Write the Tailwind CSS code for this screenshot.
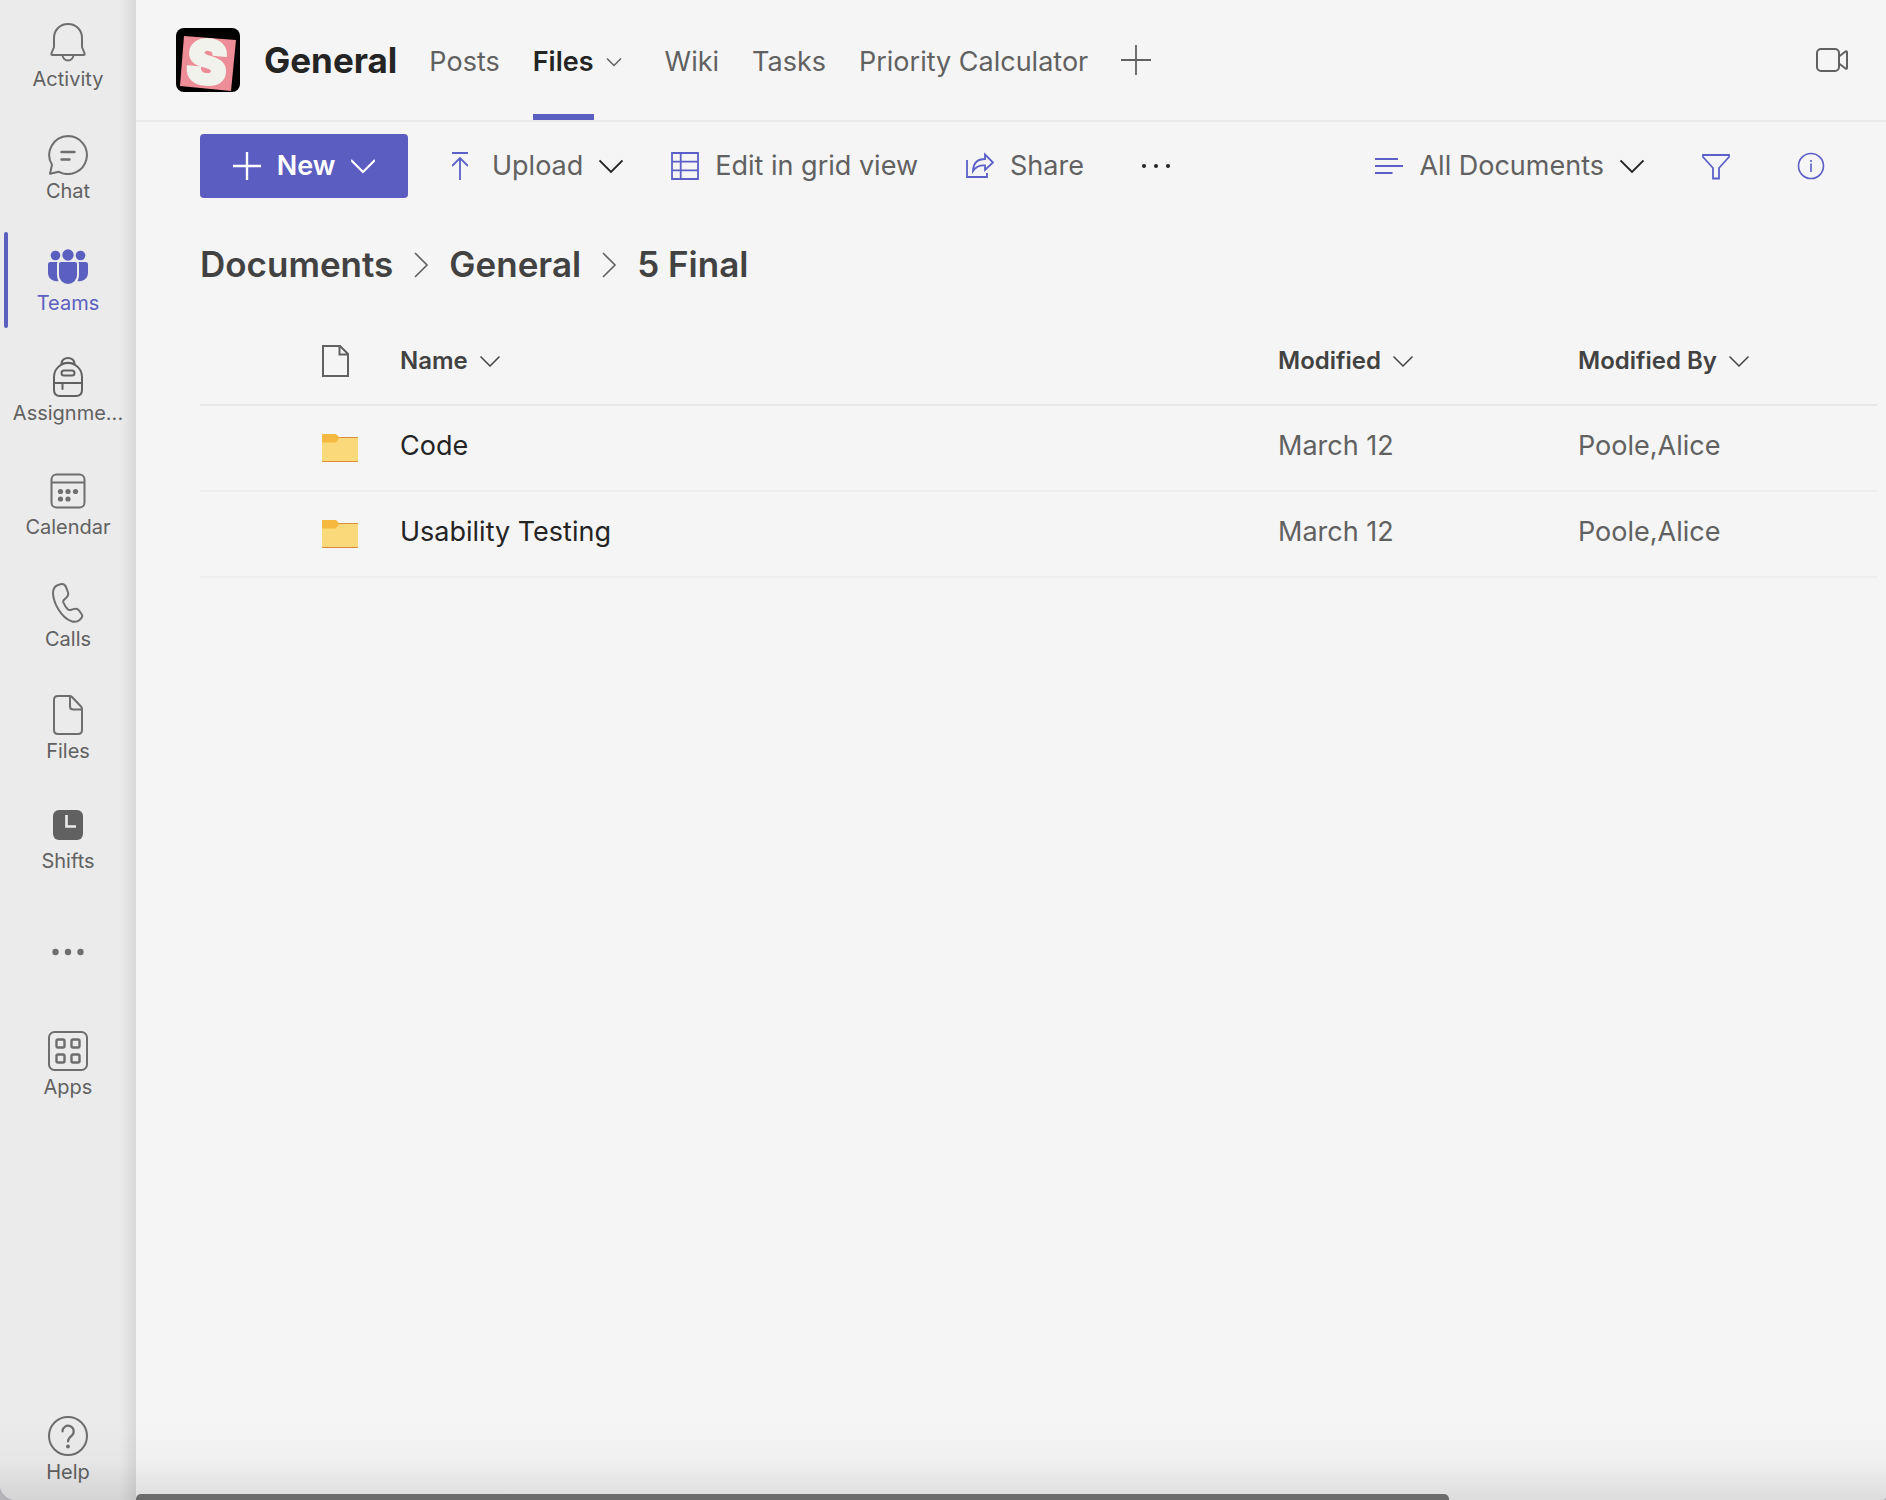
<!DOCTYPE html>
<html lang="en">
<head>
<meta charset="utf-8">
<meta name="viewport" content="width=device-width, initial-scale=1">
<title>General - Files</title>
<script src="https://cdn.jsdelivr.net/npm/@tailwindcss/browser@4"></script>
</head>
<body class="bg-[#b4b4b8] font-[Inter,sans-serif] text-[#616161]">
<div class="relative flex h-screen overflow-hidden rounded-br-[4px] rounded-bl-[16px] bg-[#f5f5f5]">

  <!-- App rail -->
  <nav aria-label="Apps" class="relative flex w-[136px] shrink-0 flex-col bg-[#ebebeb] text-[20px] leading-6">
    <a href="#" class="flex h-28 flex-col items-center gap-1 pt-[23px]">
      <svg class="size-10 shrink-0" viewBox="0 0 40 40" fill="none" stroke="#6e6e6e" stroke-width="2" stroke-linejoin="round" aria-hidden="true"><path d="M20 1C12 1 6 7 6 15v9l-2.600 6.500Q3 32 4.500 32h31Q37 32 36.600 30.500L34 24v-9C34 7 28 1 20 1ZM14.500 32a5.500 5.500 0 0 0 11 0"/></svg>
      <span>Activity</span>
    </a>
    <a href="#" class="flex h-28 flex-col items-center gap-1 pt-[23px]">
      <svg class="size-10 shrink-0" viewBox="0 0 40 40" fill="none" stroke="#6e6e6e" stroke-width="2" stroke-linecap="round" stroke-linejoin="round" aria-hidden="true"><path d="M20 1a19 19 0 1 1-9 35.800L2 38.800 4 29.800A19 19 0 0 1 20 1Z"/><path d="M13.500 17h13M13.500 24.500h8" stroke-width="2.400"/></svg>
      <span>Chat</span>
    </a>
    <a href="#" aria-current="page" class="relative flex h-28 flex-col items-center gap-1 pt-[23px] text-[#5b5fc0]">
      <span class="absolute inset-y-2 left-1 w-1 rounded-full bg-[#5b5fc0]"></span>
      <svg class="size-10 shrink-0" viewBox="0 0 40 40" fill="#5b5fc0" aria-hidden="true"><circle cx="20" cy="8" r="5.700"/><circle cx="7.500" cy="8.500" r="4.800"/><circle cx="32.500" cy="8.500" r="4.800"/><path d="M13 15h14q2 0 2 2v11a9 9 0 0 1-18 0V17q0-2 2-2Z"/><path d="M2.500 15h7Q9 16 9 17.500V28q0 3.500 1.500 6A8.500 8.500 0 0 1 0 26v-8.500Q0 15 2.500 15ZM37.500 15h-7q.5 1 .5 2.500V28q0 3.500-1.500 6A8.500 8.500 0 0 0 40 26v-8.500Q40 15 37.500 15Z"/></svg>
      <span>Teams</span>
    </a>
    <a href="#" class="flex h-28 flex-col items-center gap-1 pt-[21px]">
      <svg class="size-10 shrink-0" viewBox="0 0 40 40" fill="none" stroke="#616161" stroke-width="2" stroke-linecap="round" stroke-linejoin="round" aria-hidden="true"><path d="M13.500 6.500a6.500 5.500 0 0 1 13 0M15 6.500a8 3 0 0 1 10 0M6 20a14 14 0 0 1 28 0v13q0 6-6 6H12q-6 0-6-6ZM6 26h28M14.500 26v6"/><rect x="13.500" y="13.500" width="13" height="5" rx="2.500"/></svg>
      <span>Assignme...</span>
    </a>
    <a href="#" class="flex h-28 flex-col items-center gap-1 pt-[23px]">
      <svg class="size-10 shrink-0" viewBox="0 0 40 40" fill="none" stroke="#6e6e6e" stroke-width="2" aria-hidden="true"><rect x="3.500" y="3.500" width="33" height="33" rx="5"/><path d="M3.500 11.500h33"/><g fill="#6e6e6e" stroke="none"><circle cx="12.500" cy="20.500" r="2.600"/><circle cx="20" cy="20.500" r="2.600"/><circle cx="27.500" cy="20.500" r="2.600"/><circle cx="12.500" cy="28" r="2.600"/><circle cx="20" cy="28" r="2.600"/></g></svg>
      <span>Calendar</span>
    </a>
    <a href="#" class="flex h-28 flex-col items-center gap-1 pt-[23px]">
      <svg class="size-10 shrink-0" viewBox="0 0 40 40" fill="none" stroke="#6e6e6e" stroke-width="2" stroke-linejoin="round" aria-hidden="true"><path d="M9.500 2.200 12.500 1.300Q16.500.3 18 4l1.900 5Q21 12 18.700 14.300L15.600 17.200Q15 18 15.400 19.500 17 23.500 19.800 26.300 21 27.300 22.300 27L26.500 25.900Q29.300 25.200 31 27.500L33.500 31Q35 33.200 33.200 35.300L31.500 37Q28.500 39.800 23.500 38.300 16 35.500 10.500 26.500 5.500 18.500 5 10.500 5 4 9.500 2.200Z"/></svg>
      <span>Calls</span>
    </a>
    <a href="#" class="flex h-28 flex-col items-center gap-1 pt-[23px]">
      <svg class="size-10 shrink-0" viewBox="0 0 40 40" fill="none" stroke="#6e6e6e" stroke-width="2" stroke-linejoin="round" aria-hidden="true"><path d="M22 1H10Q6 1 6 5v30q0 4 4 4h20q4 0 4-4V14q0-1.500-1-2.500L24 2q-1-1-2-1v10.500q0 3 3 3h9"/></svg>
      <span>Files</span>
    </a>
    <a href="#" class="flex h-28 flex-col items-center gap-1 pt-[21px]">
      <svg class="size-10 shrink-0" viewBox="0 0 40 40" aria-hidden="true"><rect x="5" y="5" width="30" height="30" rx="6" fill="#616161"/><path d="M18.500 10v11.500H28" fill="none" stroke="#ebebeb" stroke-width="2.600"/></svg>
      <span>Shifts</span>
    </a>
    <button type="button" aria-label="More apps" class="flex h-28 items-center justify-center">
      <svg class="h-2 w-8" viewBox="0 0 32 8" fill="#6e6e6e" aria-hidden="true"><circle cx="3.500" cy="4" r="3.200"/><circle cx="16" cy="4" r="3.200"/><circle cx="28.500" cy="4" r="3.200"/></svg>
    </button>
    <a href="#" class="flex h-28 flex-col items-center gap-1 pt-[23px]">
      <svg class="size-10 shrink-0" viewBox="0 0 40 40" fill="none" stroke="#6e6e6e" stroke-width="2" aria-hidden="true"><rect x="1" y="1" width="38" height="38" rx="5.500"/><g stroke-width="2.400"><rect x="8.500" y="8.500" width="8" height="8" rx="1.500"/><rect x="23.500" y="8.500" width="8" height="8" rx="1.500"/><rect x="8.500" y="23.500" width="8" height="8" rx="1.500"/><rect x="23.500" y="23.500" width="8" height="8" rx="1.500"/></g></svg>
      <span>Apps</span>
    </a>
    <a href="#" class="mt-auto flex flex-col items-center gap-1 pb-4">
      <svg class="size-10 shrink-0" viewBox="0 0 40 40" fill="none" stroke="#6e6e6e" stroke-width="2" stroke-linecap="round" aria-hidden="true"><circle cx="20" cy="20" r="19"/><path d="M14.500 15.500a5.600 5.600 0 1 1 9 4.300Q20 22.500 20 25.500" stroke-width="2.200"/><circle cx="20" cy="30.500" r="1.900" fill="#6e6e6e" stroke="none"/></svg>
      <span>Help</span>
    </a>
    <div class="pointer-events-none absolute inset-y-0 right-0 w-4 bg-linear-to-r from-black/0 to-black/8"></div>
  </nav>

  <main class="flex min-w-0 grow flex-col">
    <!-- Channel header -->
    <header class="flex h-[122px] shrink-0 items-center border-b-2 border-[#e9e9e9] pr-[38px] pl-10">
      <svg class="size-16 shrink-0 overflow-visible" viewBox="0 0 64 64" role="img" aria-label="Team logo">
        <rect width="64" height="64" rx="8" fill="#000"/><path d="M8 8l52 4-5 51-51-5Z" fill="#ec8d97"/><text x="31" y="56" text-anchor="middle" font-family="Inter, sans-serif" font-weight="900" font-size="60" fill="#f1f2ec" stroke="#f1f2ec" stroke-width="3" transform="rotate(5 32 34)">S</text>
      </svg>
      <h1 class="ml-6 text-[35px] leading-10 font-bold text-[#242424]">General</h1>
      <nav aria-label="Channel tabs" class="ml-8 flex h-full items-center gap-[33px] pt-1 text-[27px] leading-8">
        <a href="#">Posts</a>
        <div class="mr-2 flex h-full items-center gap-[10px]">
          <a href="#" aria-current="page" class="flex h-full items-center border-b-6 border-[#5b5fc0] pt-[6px] font-semibold text-[#242424]">Files</a>
          <button type="button" aria-label="Files tab options"><svg class="size-5" viewBox="0 0 20 20" fill="none" stroke="#616161" stroke-width="1.500" aria-hidden="true"><path d="m3 6.500 7 7 7-7"/></svg></button>
        </div>
        <a href="#">Wiki</a>
        <a href="#">Tasks</a>
        <a href="#">Priority Calculator</a>
      </nav>
      <button type="button" aria-label="Add a tab" class="ml-8"><svg class="size-8" viewBox="0 0 32 32" fill="none" stroke="#616161" stroke-width="1.800" aria-hidden="true"><path d="M16 1v30M1 16h30"/></svg></button>
      <button type="button" aria-label="Meet" class="ml-auto"><svg class="h-6 w-8" viewBox="0 0 32 24" fill="none" stroke="#616161" stroke-width="2" stroke-linejoin="round" aria-hidden="true"><rect x="1" y="1" width="22" height="22" rx="4"/><path d="m23 8.500 6.500-5q1.500-.8 1.500.8v15.400q0 1.600-1.500.8l-6.500-5"/></svg></button>
    </header>

    <!-- Command bar -->
    <div class="mt-3 flex h-16 items-center pr-[61px] pl-16 text-[27px] leading-8">
      <button type="button" class="flex h-16 w-52 items-center justify-center gap-4 rounded-sm bg-[#5b5dc0] font-semibold text-white">
        <svg class="size-7" viewBox="0 0 28 28" fill="none" stroke="#fff" stroke-width="2.400" aria-hidden="true"><path d="M14 0v28M0 14h28"/></svg>New
        <svg class="size-6" viewBox="0 0 24 24" fill="none" stroke="#fff" stroke-width="2.200" aria-hidden="true"><path d="m0 6 12 12L24 6"/></svg>
      </button>
      <button type="button" class="ml-11 flex items-center gap-4">
        <svg class="mr-2 h-7 w-4" viewBox="0 0 16 28" fill="none" stroke="#5b5fc7" stroke-width="1.800" aria-hidden="true"><path d="M0 1h16M8 6v22M0 14l8-8 8 8"/></svg>Upload
        <svg class="size-6" viewBox="0 0 24 24" fill="none" stroke="#242424" stroke-width="1.800" aria-hidden="true"><path d="m.5 6.500 11.500 11.500L23.500 6.500"/></svg>
      </button>
      <button type="button" class="ml-12 flex items-center gap-4">
        <svg class="size-7" viewBox="0 0 28 28" fill="none" stroke="#5b5fc7" stroke-width="1.800" aria-hidden="true"><path d="M1 1h26v26H1ZM1 9.700h26M1 18.300h26M9.700 1v26"/></svg>Edit in grid view
      </button>
      <button type="button" class="ml-12 flex items-center gap-4">
        <svg class="size-7" viewBox="0 0 28 28" fill="none" stroke="#5b5fc7" stroke-width="1.800" aria-hidden="true"><path d="M1 8v17h20v-4M7 19q.5-12 12-12V2.500L27 10.500 19 18v-4.500Q11 13 7 19Z"/></svg>Share
      </button>
      <button type="button" aria-label="More commands" class="ml-14"><svg class="h-7 w-8" viewBox="0 0 32 28" fill="#242424" aria-hidden="true"><circle cx="4" cy="14" r="2"/><circle cx="16" cy="14" r="2"/><circle cx="28" cy="14" r="2"/></svg></button>
      <button type="button" aria-haspopup="menu" class="ml-auto flex items-center gap-4">
        <svg class="size-7" viewBox="0 0 28 28" fill="none" stroke="#5b5fc7" stroke-width="1.800" aria-hidden="true"><path d="M0 7h23M0 14h28M0 21h17.500"/></svg>All Documents
        <svg class="size-6" viewBox="0 0 24 24" fill="none" stroke="#242424" stroke-width="1.800" aria-hidden="true"><path d="m.5 6.500 11.500 11.500L23.500 6.500"/></svg>
      </button>
      <button type="button" aria-label="Filters" class="ml-[58px]"><svg class="size-7" viewBox="0 0 28 28" fill="none" stroke="#5b5fc7" stroke-width="1.800" aria-hidden="true"><path d="M1 3h26v2L17 16v10.500h-6V16L1 5Z"/></svg></button>
      <button type="button" aria-label="Details" class="ml-[67px]"><svg class="size-7" viewBox="0 0 28 28" fill="none" stroke="#5b5fc7" stroke-width="1.600" aria-hidden="true"><circle cx="14" cy="14" r="12.500"/><path d="M14 11.500V20M14 8v2"/></svg></button>
    </div>

    <!-- Breadcrumb -->
    <nav aria-label="Breadcrumb" class="mt-11 flex items-center gap-5 pl-16 text-[35px] leading-11 font-semibold text-[#424242]">
      <a href="#">Documents</a>
      <svg class="h-7 w-4" viewBox="0 0 16 28" fill="none" stroke="#616161" stroke-width="1.600" aria-hidden="true"><path d="m2 3 12 12L2 27"/></svg>
      <a href="#">General</a>
      <svg class="h-7 w-4" viewBox="0 0 16 28" fill="none" stroke="#616161" stroke-width="1.600" aria-hidden="true"><path d="m2 3 12 12L2 27"/></svg>
      <span aria-current="page">5 Final</span>
    </nav>

    <!-- File list -->
    <div class="mt-8 pr-[9px] pl-16">
      <table class="w-full table-fixed border-collapse text-left text-[27px] leading-8">
        <colgroup><col class="w-[200px]"><col><col class="w-[300px]"><col class="w-[299px]"></colgroup>
        <thead>
          <tr class="h-[87px] border-b-2 border-[#e8e8e8] text-[24px] text-[#424242]">
            <th scope="col" class="pl-[122px]"><svg class="h-8 w-7" viewBox="0 0 28 32" fill="none" stroke="#616161" stroke-width="2" role="img" aria-label="File type"><path d="M18 1H1v30h25V9ZM17.500 1v8.500H26"/></svg></th>
            <th scope="col" class="font-semibold"><button type="button" class="flex items-center gap-3">Name<svg class="size-5" viewBox="0 0 20 20" fill="none" stroke="#424242" stroke-width="1.500" aria-hidden="true"><path d="m.5 5.500 9.500 9.500 9.500-9.500"/></svg></button></th>
            <th scope="col" class="font-semibold"><button type="button" class="flex items-center gap-3">Modified<svg class="size-5" viewBox="0 0 20 20" fill="none" stroke="#424242" stroke-width="1.500" aria-hidden="true"><path d="m.5 5.500 9.500 9.500 9.500-9.500"/></svg></button></th>
            <th scope="col" class="font-semibold"><button type="button" class="flex items-center gap-3">Modified By<svg class="size-5" viewBox="0 0 20 20" fill="none" stroke="#424242" stroke-width="1.500" aria-hidden="true"><path d="m.5 5.500 9.500 9.500 9.500-9.500"/></svg></button></th>
          </tr>
        </thead>
        <tbody>
          <tr class="h-[86px] border-b-2 border-[#eeeeee]">
            <td class="pl-[122px]"><svg class="h-7 w-9" viewBox="0 0 36 28" role="img" aria-label="Folder"><rect y="3" width="36" height="25" rx="1" fill="#d98c3a"/><path d="M0 1q0-1 1-1h12q1 0 2 1l3 3-4 5H0Z" fill="#f5b93f"/><path d="M0 8.500h13.500L17.500 4H35q1 0 1 1v21q0 1-1 1H1q-1 0-1-1Z" fill="#f9d979"/></svg></td>
            <td class="pb-[5px]"><a href="#" class="text-[#242424]">Code</a></td>
            <td class="pb-[5px]">March 12</td>
            <td class="pb-[5px]">Poole,Alice</td>
          </tr>
          <tr class="h-[86px] border-b-2 border-[#eeeeee]">
            <td class="pl-[122px]"><svg class="h-7 w-9" viewBox="0 0 36 28" role="img" aria-label="Folder"><rect y="3" width="36" height="25" rx="1" fill="#d98c3a"/><path d="M0 1q0-1 1-1h12q1 0 2 1l3 3-4 5H0Z" fill="#f5b93f"/><path d="M0 8.500h13.500L17.500 4H35q1 0 1 1v21q0 1-1 1H1q-1 0-1-1Z" fill="#f9d979"/></svg></td>
            <td class="pb-[5px]"><a href="#" class="text-[#242424]">Usability Testing</a></td>
            <td class="pb-[5px]">March 12</td>
            <td class="pb-[5px]">Poole,Alice</td>
          </tr>
        </tbody>
      </table>
    </div>
  </main>

  <!-- Shade along the window's lower edge, and the horizontal scrollbar -->
  <div class="pointer-events-none absolute inset-x-0 bottom-0 h-20 bg-linear-to-b from-black/0 via-black/2 to-black/10"></div>
  <div class="absolute inset-x-0 bottom-0 pl-[136px]"><div class="h-[6px] w-3/4 rounded-t-[5px] bg-[#6c6c6c]"></div></div>
</div>
</body>
</html>
